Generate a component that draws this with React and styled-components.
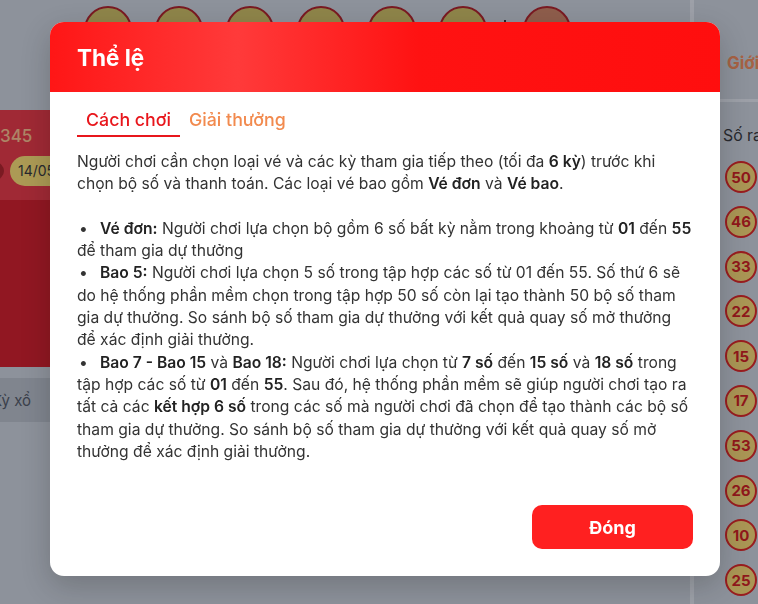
import React, { useState } from "react";
import styled, { createGlobalStyle } from "styled-components";

const GlobalStyle = createGlobalStyle`
  html, body {
    margin: 0;
    padding: 0;
    height: 100%;
    overflow: hidden;
  }
  body {
    font-family: Inter, "Noto Sans", "Liberation Sans", sans-serif;
    background: #ced4da;
  }
  #root {
    height: 100%;
  }
`;

const topBalls = [1, 2, 3, 4, 5, 6];
const hotNumbers = ["50", "46", "33", "22", "15", "17", "53", "26", "10", "25"];

const App = () => {
  const [tab, setTab] = useState("rule");
  const [open, setOpen] = useState(true);

  return (
    <>
      <GlobalStyle />
      <Page>
        <Main>
          <BallStrip>
            {topBalls.map((b) => (
              <Ball key={b} />
            ))}
            <Separator />
            <Ball $power />
          </BallStrip>

          <DrawCard>
            <CardTop>
              <DrawCode>345</DrawCode>
              <DateRow>
                <RedDot />
                <DatePill>14/05/2024</DatePill>
              </DateRow>
            </CardTop>
            <CardBody />
          </DrawCard>

          <TabBand>
            <BandLabel>Kỳ xổ</BandLabel>
          </TabBand>
        </Main>

        <Sidebar>
          <SideHead>Giới thiệu</SideHead>
          <SideTitle>Số ra nhiều nhất</SideTitle>
          <HotList>
            {hotNumbers.map((n) => (
              <HotBall key={n}>{n}</HotBall>
            ))}
          </HotList>
        </Sidebar>
      </Page>

      {open && (
        <Overlay>
          <Modal>
            <ModalHeader>Thể lệ</ModalHeader>
            <Tabs>
              <Tab $active={tab === "rule"} onClick={() => setTab("rule")}>
                Cách chơi
              </Tab>
              <Tab $active={tab === "prize"} onClick={() => setTab("prize")}>
                Giải thưởng
              </Tab>
            </Tabs>

            <Content>
              {tab === "rule" ? (
                <>
                  <p>
                    Người chơi cần chọn loại vé và các kỳ tham gia tiếp theo (tối
                    đa <b>6 kỳ</b>) trước khi chọn bộ số và thanh toán. Các loại vé
                    bao gồm <b>Vé đơn</b> và <b>Vé bao</b>.
                  </p>
                  <Bullets>
                    <li>
                      <b>Vé đơn:</b> Người chơi lựa chọn bộ gồm 6 số bất kỳ nằm
                      trong khoảng từ <b>01</b> đến <b>55</b> để tham gia dự thưởng
                    </li>
                    <li>
                      <b>Bao 5:</b> Người chơi lựa chọn 5 số trong tập hợp các số
                      từ 01 đến 55. Số thứ 6 sẽ do hệ thống phần mềm chọn trong tập
                      hợp 50 số còn lại tạo thành 50 bộ số tham gia dự thưởng. So
                      sánh bộ số tham gia dự thưởng với kết quả quay số mở thưởng
                      để xác định giải thưởng.
                    </li>
                    <li>
                      <b>Bao 7 - Bao 15</b> và <b>Bao 18:</b> Người chơi lựa chọn
                      từ <b>7 số</b> đến <b>15 số</b> và <b>18 số</b> trong tập hợp
                      các số từ <b>01</b> đến <b>55</b>. Sau đó, hệ thống phần mềm
                      sẽ giúp người chơi tạo ra tất cả các <b>kết hợp 6 số</b> trong
                      các số mà người chơi đã chọn để tạo thành các bộ số tham gia
                      dự thưởng. So sánh bộ số tham gia dự thưởng với kết quả quay
                      số mở thưởng để xác định giải thưởng.
                    </li>
                  </Bullets>
                </>
              ) : (
                <Bullets>
                  <li>
                    <b>Jackpot 1:</b> Trùng 6 số của kết quả quay số mở thưởng
                  </li>
                  <li>
                    <b>Jackpot 2:</b> Trùng 5 số và số đặc biệt
                  </li>
                  <li>
                    <b>Giải Nhất:</b> Trùng 5 số - 40.000.000 đồng
                  </li>
                  <li>
                    <b>Giải Nhì:</b> Trùng 4 số - 500.000 đồng
                  </li>
                  <li>
                    <b>Giải Ba:</b> Trùng 3 số - 50.000 đồng
                  </li>
                </Bullets>
              )}
            </Content>

            <Footer>
              <CloseButton onClick={() => setOpen(false)}>Đóng</CloseButton>
            </Footer>
          </Modal>
        </Overlay>
      )}
    </>
  );
};
export default App;

const Page = styled.div`
  display: flex;
  height: 100vh;
  overflow: hidden;
`;

const Main = styled.div`
  width: 690px;
  flex-shrink: 0;
  display: flex;
  flex-direction: column;
`;

const BallStrip = styled.div`
  height: 104px;
  display: flex;
  align-items: flex-start;
  gap: 23px;
  padding: 6px 0 0 84px;
  box-sizing: border-box;
`;

const Ball = styled.div`
  width: 48px;
  height: 48px;
  box-sizing: border-box;
  border-radius: 50%;
  background: ${(p) => (p.$power ? "#d18461" : "#d1c05e")};
  border: 2px solid #b11d21;
`;

const Separator = styled.div`
  width: 2px;
  height: 10px;
  margin: 14px -6px 0;
  background: #333;
`;

const DrawCard = styled.div`
  margin-top: 6px;
  height: 257px;
  display: flex;
  flex-direction: column;
  background: #d41821;
`;

const CardTop = styled.div`
  height: 90px;
  background: #eb343e;
  padding-top: 16px;
  box-sizing: border-box;
`;

const DrawCode = styled.div`
  font-size: 17px;
  font-weight: 500;
  color: #ffc08a;
  line-height: 20px;
`;

const DateRow = styled.div`
  display: flex;
  align-items: center;
  gap: 6px;
  margin-top: 10px;
  margin-left: -14px;
`;

const RedDot = styled.div`
  width: 18px;
  height: 18px;
  border-radius: 50%;
  background: #b11d21;
`;

const DatePill = styled.div`
  height: 30px;
  padding: 0 8px;
  border-radius: 15px;
  background: #fee16f;
  font-size: 14px;
  line-height: 30px;
  color: #333;
`;

const CardBody = styled.div`
  flex: 1;
`;

const TabBand = styled.div`
  margin-top: 11px;
  height: 44px;
  display: flex;
  align-items: center;
  background: #bac0c7;
`;

const BandLabel = styled.div`
  font-size: 15px;
  color: #515760;
  text-indent: -8px;
`;

const Sidebar = styled.div`
  flex: 1;
  border-left: 4px solid #e6eaee;
  display: flex;
  flex-direction: column;
  white-space: nowrap;
`;

const SideHead = styled.div`
  height: 102px;
  box-sizing: border-box;
  display: flex;
  align-items: flex-end;
  padding: 0 0 26px 33px;
  border-bottom: 3px solid #e6eaee;
  font-size: 17px;
  font-weight: 700;
  color: #f58a55;
`;

const SideTitle = styled.div`
  margin-top: 24px;
  padding-left: 29px;
  font-size: 15.8px;
  color: #333;
`;

const HotList = styled.div`
  margin-top: 16px;
  padding-left: 31px;
  display: flex;
  flex-direction: column;
  gap: 12.8px;
`;

const HotBall = styled.div`
  width: 32px;
  height: 32px;
  box-sizing: border-box;
  border-radius: 50%;
  border: 2px solid #e0211d;
  background: #fbda6f;
  color: #d21a17;
  font-size: 15px;
  font-weight: 700;
  display: flex;
  align-items: center;
  justify-content: center;
`;

const Overlay = styled.div`
  position: fixed;
  inset: 0;
  background: rgba(20, 24, 36, 0.35);
  display: flex;
  align-items: flex-start;
  padding: 22px 0 0 50px;
`;

const Modal = styled.div`
  width: 670px;
  background: #fff;
  border-radius: 14px;
  overflow: hidden;
  box-shadow: rgba(0, 0, 0, 0.2) 0px 10px 30px 0px;
`;

const ModalHeader = styled.div`
  height: 70px;
  display: flex;
  align-items: center;
  padding: 0 27px;
  background: linear-gradient(
    90deg,
    #ff1616 0%,
    #ff3a3a 28%,
    #ff1212 55%,
    #ff0e0e 100%
  );
  color: #fff;
  font-size: 22.5px;
  font-weight: 700;
`;

const Tabs = styled.div`
  display: flex;
  margin: 16px 27px 0;
`;

const Tab = styled.button`
  border: none;
  background: none;
  cursor: pointer;
  font-family: inherit;
  padding: 0 9px 3px;
  font-size: 17.8px;
  font-weight: 500;
  line-height: 24px;
  color: ${(p) => (p.$active ? "#e8161c" : "#f28a4e")};
  border-bottom: 2px solid ${(p) => (p.$active ? "#e8161c" : "transparent")};
`;

const Content = styled.div`
  margin-top: 14px;
  padding: 0 27px;
  font-size: 15.65px;
  line-height: 22.3px;
  color: #333;
  min-height: 312px;
  p {
    margin: 0 0 22.3px;
  }
  b {
    font-weight: 600;
    color: #222;
  }
`;

const Bullets = styled.ul`
  list-style: none;
  margin: 0;
  padding: 0;
  li::before {
    content: "•";
    display: inline-block;
    width: 23px;
    padding-left: 2px;
    box-sizing: border-box;
    color: #333;
  }
`;

const Footer = styled.div`
  display: flex;
  justify-content: flex-end;
  padding: 42px 27px 27px;
`;

const CloseButton = styled.button`
  width: 161px;
  height: 44px;
  border: none;
  border-radius: 10px;
  background: #ff2020;
  color: #fff;
  font-family: inherit;
  font-size: 18px;
  font-weight: 700;
  cursor: pointer;
`;
